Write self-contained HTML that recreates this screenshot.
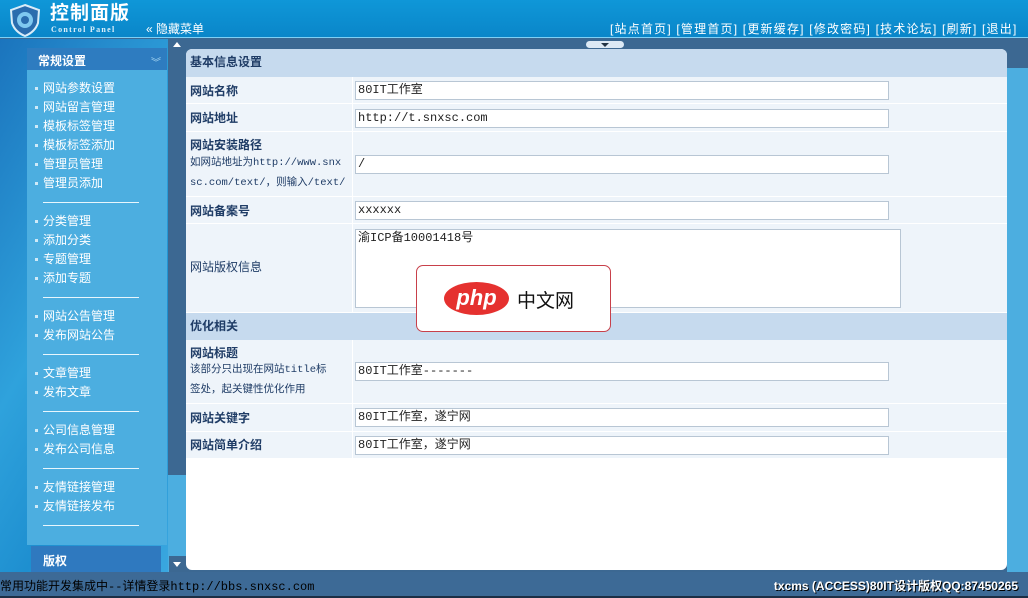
<!DOCTYPE html>
<html><head><meta charset="utf-8"><style>
*{margin:0;padding:0;box-sizing:border-box}
body{width:1028px;height:598px;overflow:hidden;position:relative;background:#3c6892;font-family:"Liberation Sans","WenQuanYi Zen Hei","Noto Sans CJK SC",sans-serif;font-size:12px}
.hdr{position:absolute;left:0;top:0;width:1028px;height:38px;background:linear-gradient(#0f97d8,#0a86c9);border-bottom:1px solid #7fd0f5}
.abs{position:absolute}
.side{position:absolute;left:0;top:39px;width:168px;height:533px;background:linear-gradient(120deg,#1b74bd 0%,#2fa2dc 45%,#1e8fd0 70%,#3aa7e0 100%)}
.panel{position:absolute;left:27px;top:70px;width:140px;height:475px;background:#4caee0}
.mi{position:absolute;left:35px;color:#fff;font-size:12px;line-height:14px}
.mi:before{content:"";display:inline-block;width:3px;height:3px;background:#cfeaf8;margin-right:5px;vertical-align:middle}
.sep{position:absolute;left:43px;width:96px;height:1px;background:#e8f6fd}
.main{position:absolute;left:186px;top:49px;width:821px;height:521px;background:#fff;border-radius:6px 6px 6px 6px;overflow:hidden}
.row{position:absolute;left:0;width:821px;background:#eef4fa;border-bottom:1px solid #fff}
.row .l{position:absolute;left:4px;color:#1f3c66;font-weight:bold;font-size:12px}
.row .d{position:absolute;left:4px;color:#1f3c66;font-size:10.5px;line-height:20px;font-family:"Liberation Mono","WenQuanYi Zen Hei",monospace;white-space:nowrap}
.vl{position:absolute;left:166px;top:0;bottom:0;width:1px;background:#fff}
.in{position:absolute;left:169px;width:534px;height:19px;background:#fff;border:1px solid #b8c6d4;font-family:"Liberation Mono","WenQuanYi Zen Hei",monospace;font-size:12px;line-height:17px;padding-left:2px;color:#222}
.sec{position:absolute;left:0;width:821px;background:#c6daee;color:#1f3c66;font-weight:bold;padding-left:4px;font-size:12px}
</style></head><body>
<div class="hdr"></div>
<svg class="abs" style="left:8px;top:3px" width="34" height="34" viewBox="0 0 34 34"><path d="M17 2 L31 7 L30 20 Q27 29 17 33 Q7 29 4 20 L3 7 Z" fill="#2a6cae" stroke="#d9ecf8" stroke-width="2"/><circle cx="17" cy="17" r="8" fill="#7fc8f0"/><circle cx="17" cy="17" r="4" fill="#2a6cae"/></svg>
<div class="abs" style="left:50px;top:2px;color:#fff;font-size:19px;font-weight:bold;letter-spacing:1px;line-height:24px">控制面版</div>
<div class="abs" style="left:51px;top:25px;color:#dff1fb;font-size:8px;font-weight:bold;font-family:'Liberation Serif',serif;letter-spacing:1.3px;line-height:9px">Control Panel</div>
<div class="abs" style="left:146px;top:20px;color:#fff;font-size:12px">« 隐藏菜单</div>
<div class="abs" style="left:610px;top:20px;color:#fff;font-size:12px;letter-spacing:1.2px;white-space:nowrap">[站点首页] [管理首页] [更新缓存] [修改密码] [技术论坛] [刷新] [退出]</div>
<div class="side"></div>
<div class="abs" style="left:27px;top:48px;width:140px;height:23px;background:#2e7cc0"></div>
<div class="abs" style="left:38px;top:52px;color:#fff;font-weight:bold;font-size:12px">常规设置</div>
<div class="abs" style="left:151px;top:54px;color:#a8d8f3;font-size:10px">︾</div>
<div class="panel"></div>
<div class="mi" style="top:81px">网站参数设置</div><div class="mi" style="top:100px">网站留言管理</div><div class="mi" style="top:119px">模板标签管理</div><div class="mi" style="top:138px">模板标签添加</div><div class="mi" style="top:157px">管理员管理</div><div class="mi" style="top:176px">管理员添加</div>
<div class="sep" style="top:202px"></div>
<div class="mi" style="top:214px">分类管理</div><div class="mi" style="top:233px">添加分类</div><div class="mi" style="top:252px">专题管理</div><div class="mi" style="top:271px">添加专题</div>
<div class="sep" style="top:297px"></div>
<div class="mi" style="top:309px">网站公告管理</div><div class="mi" style="top:328px">发布网站公告</div>
<div class="sep" style="top:354px"></div>
<div class="mi" style="top:366px">文章管理</div><div class="mi" style="top:385px">发布文章</div>
<div class="sep" style="top:411px"></div>
<div class="mi" style="top:423px">公司信息管理</div><div class="mi" style="top:442px">发布公司信息</div>
<div class="sep" style="top:468px"></div>
<div class="mi" style="top:480px">友情链接管理</div><div class="mi" style="top:499px">友情链接发布</div>
<div class="sep" style="top:525px"></div>
<div class="abs" style="left:31px;top:546px;width:130px;height:26px;background:#2f79bf"></div>
<div class="abs" style="left:43px;top:552px;color:#fff;font-weight:bold">版权</div>
<div class="abs" style="left:168px;top:475px;width:18px;height:97px;background:#4caee0"></div>
<div class="abs" style="left:169px;top:556px;width:17px;height:16px;background:#3c6892"></div>
<div class="abs" style="left:173px;top:42px;width:0;height:0;border-left:4px solid transparent;border-right:4px solid transparent;border-bottom:5px solid #fff"></div>
<div class="abs" style="left:173px;top:562px;width:0;height:0;border-left:4px solid transparent;border-right:4px solid transparent;border-top:5px solid #fff"></div>
<div class="abs" style="left:586px;top:41px;width:38px;height:7px;background:#dce9f5;border-radius:4px"></div>
<div class="abs" style="left:601px;top:43px;width:0;height:0;border-left:4px solid transparent;border-right:4px solid transparent;border-top:4px solid #234"></div>
<div class="abs" style="left:1007px;top:68px;width:21px;height:504px;background:#4caee0"></div>
<div class="main">
<div class="sec" style="top:0;height:28px;line-height:27px">基本信息设置</div>
<div class="row" style="top:28px;height:27px"><div class="vl"></div><div class="l" style="top:5px">网站名称</div><div class="in" style="top:4px">80IT工作室</div></div>
<div class="row" style="top:55px;height:28px"><div class="vl"></div><div class="l" style="top:5px">网站地址</div><div class="in" style="top:5px">http://t.snxsc.com</div></div>
<div class="row" style="top:83px;height:65px"><div class="vl"></div><div class="l" style="top:4px">网站安装路径</div><div class="d" style="top:21px">如网站地址为http://www.snx<br>sc.com/text/，则输入/text/</div><div class="in" style="top:23px">/</div></div>
<div class="row" style="top:148px;height:27px"><div class="vl"></div><div class="l" style="top:5px">网站备案号</div><div class="in" style="top:4px">xxxxxx</div></div>
<div class="row" style="top:175px;height:89px"><div class="vl"></div><div class="d" style="top:33px;font-size:12px;font-family:'Liberation Sans','WenQuanYi Zen Hei',sans-serif">网站版权信息</div><div class="in" style="top:5px;height:79px;width:546px">渝ICP备10001418号</div></div>
<div class="sec" style="top:264px;height:27px;line-height:26px">优化相关</div>
<div class="row" style="top:291px;height:64px"><div class="vl"></div><div class="l" style="top:4px">网站标题</div><div class="d" style="top:20px">该部分只出现在网站title标<br>签处，起关键性优化作用</div><div class="in" style="top:22px">80IT工作室-------</div></div>
<div class="row" style="top:355px;height:28px"><div class="vl"></div><div class="l" style="top:5px">网站关键字</div><div class="in" style="top:4px">80IT工作室，遂宁网</div></div>
<div class="row" style="top:383px;height:27px"><div class="vl"></div><div class="l" style="top:4px">网站简单介绍</div><div class="in" style="top:4px">80IT工作室，遂宁网</div></div>
</div>
<div class="abs" style="left:416px;top:265px;width:195px;height:67px;background:#fff;border:1px solid #c8404a;border-radius:7px"></div>
<div class="abs" style="left:444px;top:282px;width:65px;height:33px;background:#e5312f;border-radius:50%;color:#fff;font-weight:bold;font-style:italic;font-size:22px;text-align:center;line-height:31px">php</div>
<div class="abs" style="left:517px;top:287px;color:#111;font-size:19px;font-family:'Noto Sans CJK SC',sans-serif;line-height:26px">中文网</div>
<div class="abs" style="left:0;top:572px;width:1028px;height:26px;background:#3d6a96;border-bottom:2px solid #1c2f45"></div>
<div class="abs" style="left:0;top:577px;color:#000;font-size:12px;font-family:'Liberation Mono','WenQuanYi Zen Hei',monospace">常用功能开发集成中--详情登录http://bbs.snxsc.com</div>
<div class="abs" style="left:762px;top:577px;width:256px;text-align:right;color:#fff;font-weight:bold;font-size:12px;text-shadow:1px 1px 0 #000;white-space:nowrap">txcms (ACCESS)80IT设计版权QQ:87450265</div>
</body></html>
